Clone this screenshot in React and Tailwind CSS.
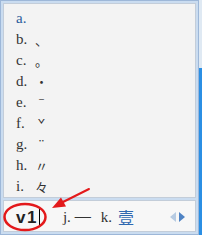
import React from 'react';

// candidate rows shown by the IME for "v1"
const rows = [
  { key: 'a', sym: '', active: true },
  { key: 'b', sym: '、' },
  { key: 'c', sym: '。' },
  { key: 'd', sym: '·', center: true },
  { key: 'e', sym: 'ˉ', center: true },
  { key: 'f', sym: 'ˇ', center: true },
  { key: 'g', sym: '¨', center: true },
  { key: 'h', sym: '〃' },
  { key: 'i', sym: '々' },
];

const serif = { fontFamily: '"Liberation Serif", "Noto Sans CJK SC", serif' };

const Row = ({ item }) => (
  <div className="flex h-[21px] items-center pl-[12px]">
    <span
      className={`w-[19px] text-[15px] leading-none ${item.active ? 'text-[#2c5d9c]' : 'text-[#333333]'}`}
      style={serif}
    >
      {item.key}.
    </span>
    <span
      className={`w-[13px] text-[13px] leading-none text-[#333333] font-['Noto_Sans_CJK_SC',sans-serif] ${item.center ? 'text-center' : 'text-left'}`}
    >
      {item.sym}
    </span>
  </div>
);

const App = () => {
  return (
    <div className="flex h-[235px] w-[202px] overflow-hidden bg-white">
      {/* IME candidate window */}
      <div className="relative flex h-full w-[199px] flex-col gap-[2px] border border-[#9db7d8] bg-[#cadcf0] p-[2px]">
        <div className="h-[195px] border border-[#c3cdd9] bg-[#f3f3f3] pt-[4px]">
          {rows.map((r) => (
            <Row key={r.key} item={r} />
          ))}
        </div>

        {/* composition bar */}
        <div className="flex h-[32px] items-center border border-[#c3cdd9] bg-[#f7f7f7] pt-[2px]">
          <span className="ml-[12px] text-[17px] font-bold leading-none tracking-[1.5px] text-[#222222] font-['Liberation_Sans',sans-serif]">
            v1
          </span>
          <span className="ml-[1px] h-[17px] w-px bg-black" />
          <span className="ml-[23px] text-[15px] leading-none text-[#333333]" style={serif}>
            j.
          </span>
          <span className="ml-[3px] w-[21px] text-[18px] font-light leading-none text-[#333333] font-['Noto_Sans_CJK_SC',sans-serif]">
            一
          </span>
          <span className="ml-[6px] text-[15px] leading-none text-[#333333]" style={serif}>
            k.
          </span>
          <span className="ml-[6px] text-[16px] leading-none text-[#2f68b0] font-['Noto_Sans_CJK_SC',sans-serif]">
            壹
          </span>
          <div className="ml-auto mr-[10px] flex items-center gap-[3px]">
            <svg width="6" height="10" viewBox="0 0 6 10">
              <path d="M6 0 L0 5 L6 10 Z" fill="#b7cbe2" />
            </svg>
            <svg width="6" height="10" viewBox="0 0 6 10">
              <path d="M0 0 L6 5 L0 10 Z" fill="#4f83c4" />
            </svg>
          </div>
        </div>

        {/* red annotation over the window */}
        <svg className="pointer-events-none absolute left-[-1px] top-[-1px]" width="199" height="235" viewBox="0 0 199 235">
          <ellipse cx="25" cy="217" rx="20.5" ry="13" fill="none" stroke="#e3191b" strokeWidth="2.5" />
          <line x1="89" y1="189" x2="62" y2="202.5" stroke="#e3191b" strokeWidth="2" strokeLinecap="round" />
          <polygon points="52,208 61,197.5 66,206.5" fill="#e3191b" />
        </svg>
      </div>

      {/* desktop showing at the right edge */}
      <div className="flex h-full w-[3px] flex-col">
        <div className="h-[68px] bg-[#dfe9f3]" />
        <div className="flex-1 bg-[#2b8fe4]" />
      </div>
    </div>
  );
};

export default App;
